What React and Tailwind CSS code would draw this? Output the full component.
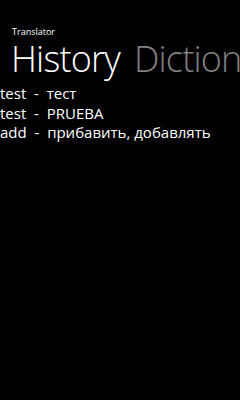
export default function App() {
  const rows = [
    ['test', 'тест'],
    ['test', 'PRUEBA'],
    ['add', 'прибавить, добавлять'],
  ]
  return (
    <div className="w-[240px] h-[400px] bg-black text-white overflow-hidden font-['Open_Sans',sans-serif]">
      <div className="pl-3 pt-[26px] text-[9px] leading-[12px]">Translator</div>
      <div className="flex whitespace-nowrap pl-[11px] mt-[1px] text-[36px] leading-[40px] font-light tracking-[-0.8px]">
        <span>History</span>
        <span className="ml-[14px] text-[#808080]">Diction</span>
      </div>
      <div className="mt-[5px] text-[15px] leading-[19.5px]">
        {rows.map(([a, b], i) => (
          <div key={i} className="whitespace-nowrap">
            {a}&nbsp;&nbsp;-&nbsp;&nbsp;{b}
          </div>
        ))}
      </div>
    </div>
  )
}
